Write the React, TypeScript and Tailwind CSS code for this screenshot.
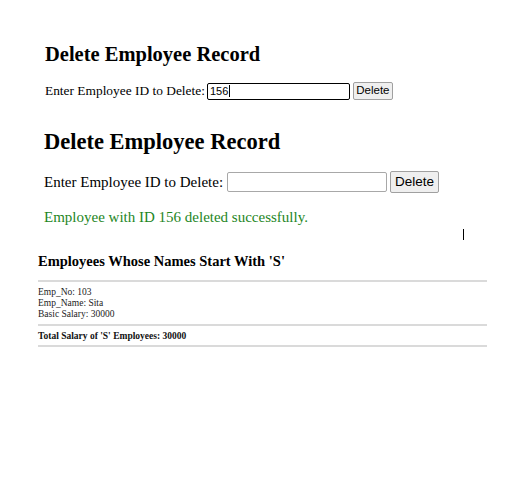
import React from "react";

export default function App() {
  const serif = { fontFamily: '"Liberation Serif", "Times New Roman", serif' };
  return (
    <div className="relative min-h-[487px] w-full bg-white text-black" style={serif}>
      {/* Section 1 */}
      <div className="pl-[45px] pt-[42px]">
        <h1 className="text-[20.5px] font-bold leading-[24px]">Delete Employee Record</h1>
        <div className="mt-[16px] flex h-[18px] items-center">
          <span className="text-[13.4px] leading-[18px] whitespace-nowrap">Enter Employee ID to Delete:</span>
          <div className="ml-[2px] flex h-[17px] w-[143px] items-center rounded-[2px] border-[1.5px] border-black pl-[2px] font-['Liberation_Sans',Arial,sans-serif] text-[11px] leading-none">
            <span>156</span>
            <span className="ml-[1px] inline-block h-[12px] w-[1px] bg-black" />
          </div>
          <button className="ml-[3px] flex h-[18px] w-[40px] items-center justify-center rounded-[2px] border border-[#a0a0a0] bg-[#efefef] font-['Liberation_Sans',Arial,sans-serif] text-[11.5px] leading-none text-black">
            Delete
          </button>
        </div>
      </div>

      {/* Section 2 */}
      <div className="mt-[29px] pl-[44px]">
        <h2 className="text-[22.5px] font-bold leading-[26px]">Delete Employee Record</h2>
        <div className="mt-[16px] flex h-[22px] items-center">
          <span className="text-[15px] leading-[22px] whitespace-nowrap">Enter Employee ID to Delete:</span>
          <div className="ml-[4px] h-[20px] w-[160px] rounded-[2px] border border-[#a8a8a8] bg-white" />
          <button className="ml-[3px] flex h-[22px] w-[49px] items-center justify-center rounded-[2px] border border-[#a0a0a0] bg-[#efefef] font-['Liberation_Sans',Arial,sans-serif] text-[13.5px] leading-none text-black">
            Delete
          </button>
        </div>
        <p className="mt-[13.5px] text-[15px] leading-[20px] text-[#1e861e]">Employee with ID 156 deleted successfully.</p>
      </div>

      {/* Section 3 */}
      <div className="mt-[25.5px] pl-[38px]">
        <h3 className="text-[14.5px] font-bold leading-[18px]">Employees Whose Names Start With 'S'</h3>
        <div className="mt-[10px] h-[2px] w-[449px] bg-[#dadada]" />
        <div className="mt-[4.5px] text-[9.5px] leading-[11px] text-[#222]">
          <div>Emp_No: 103</div>
          <div>Emp_Name: Sita</div>
          <div>Basic Salary: 30000</div>
        </div>
        <div className="mt-[4.5px] h-[2px] w-[449px] bg-[#dadada]" />
        <div className="mt-[5px] text-[9.5px] font-bold leading-[11px] text-[#111]">Total Salary of 'S' Employees: 30000</div>
        <div className="mt-[3px] h-[2px] w-[449px] bg-[#dadada]" />
      </div>

      {/* mouse I-beam cursor */}
      <div className="absolute left-[463px] top-[229px] h-[11px] w-[1px] bg-black" />
    </div>
  );
}
